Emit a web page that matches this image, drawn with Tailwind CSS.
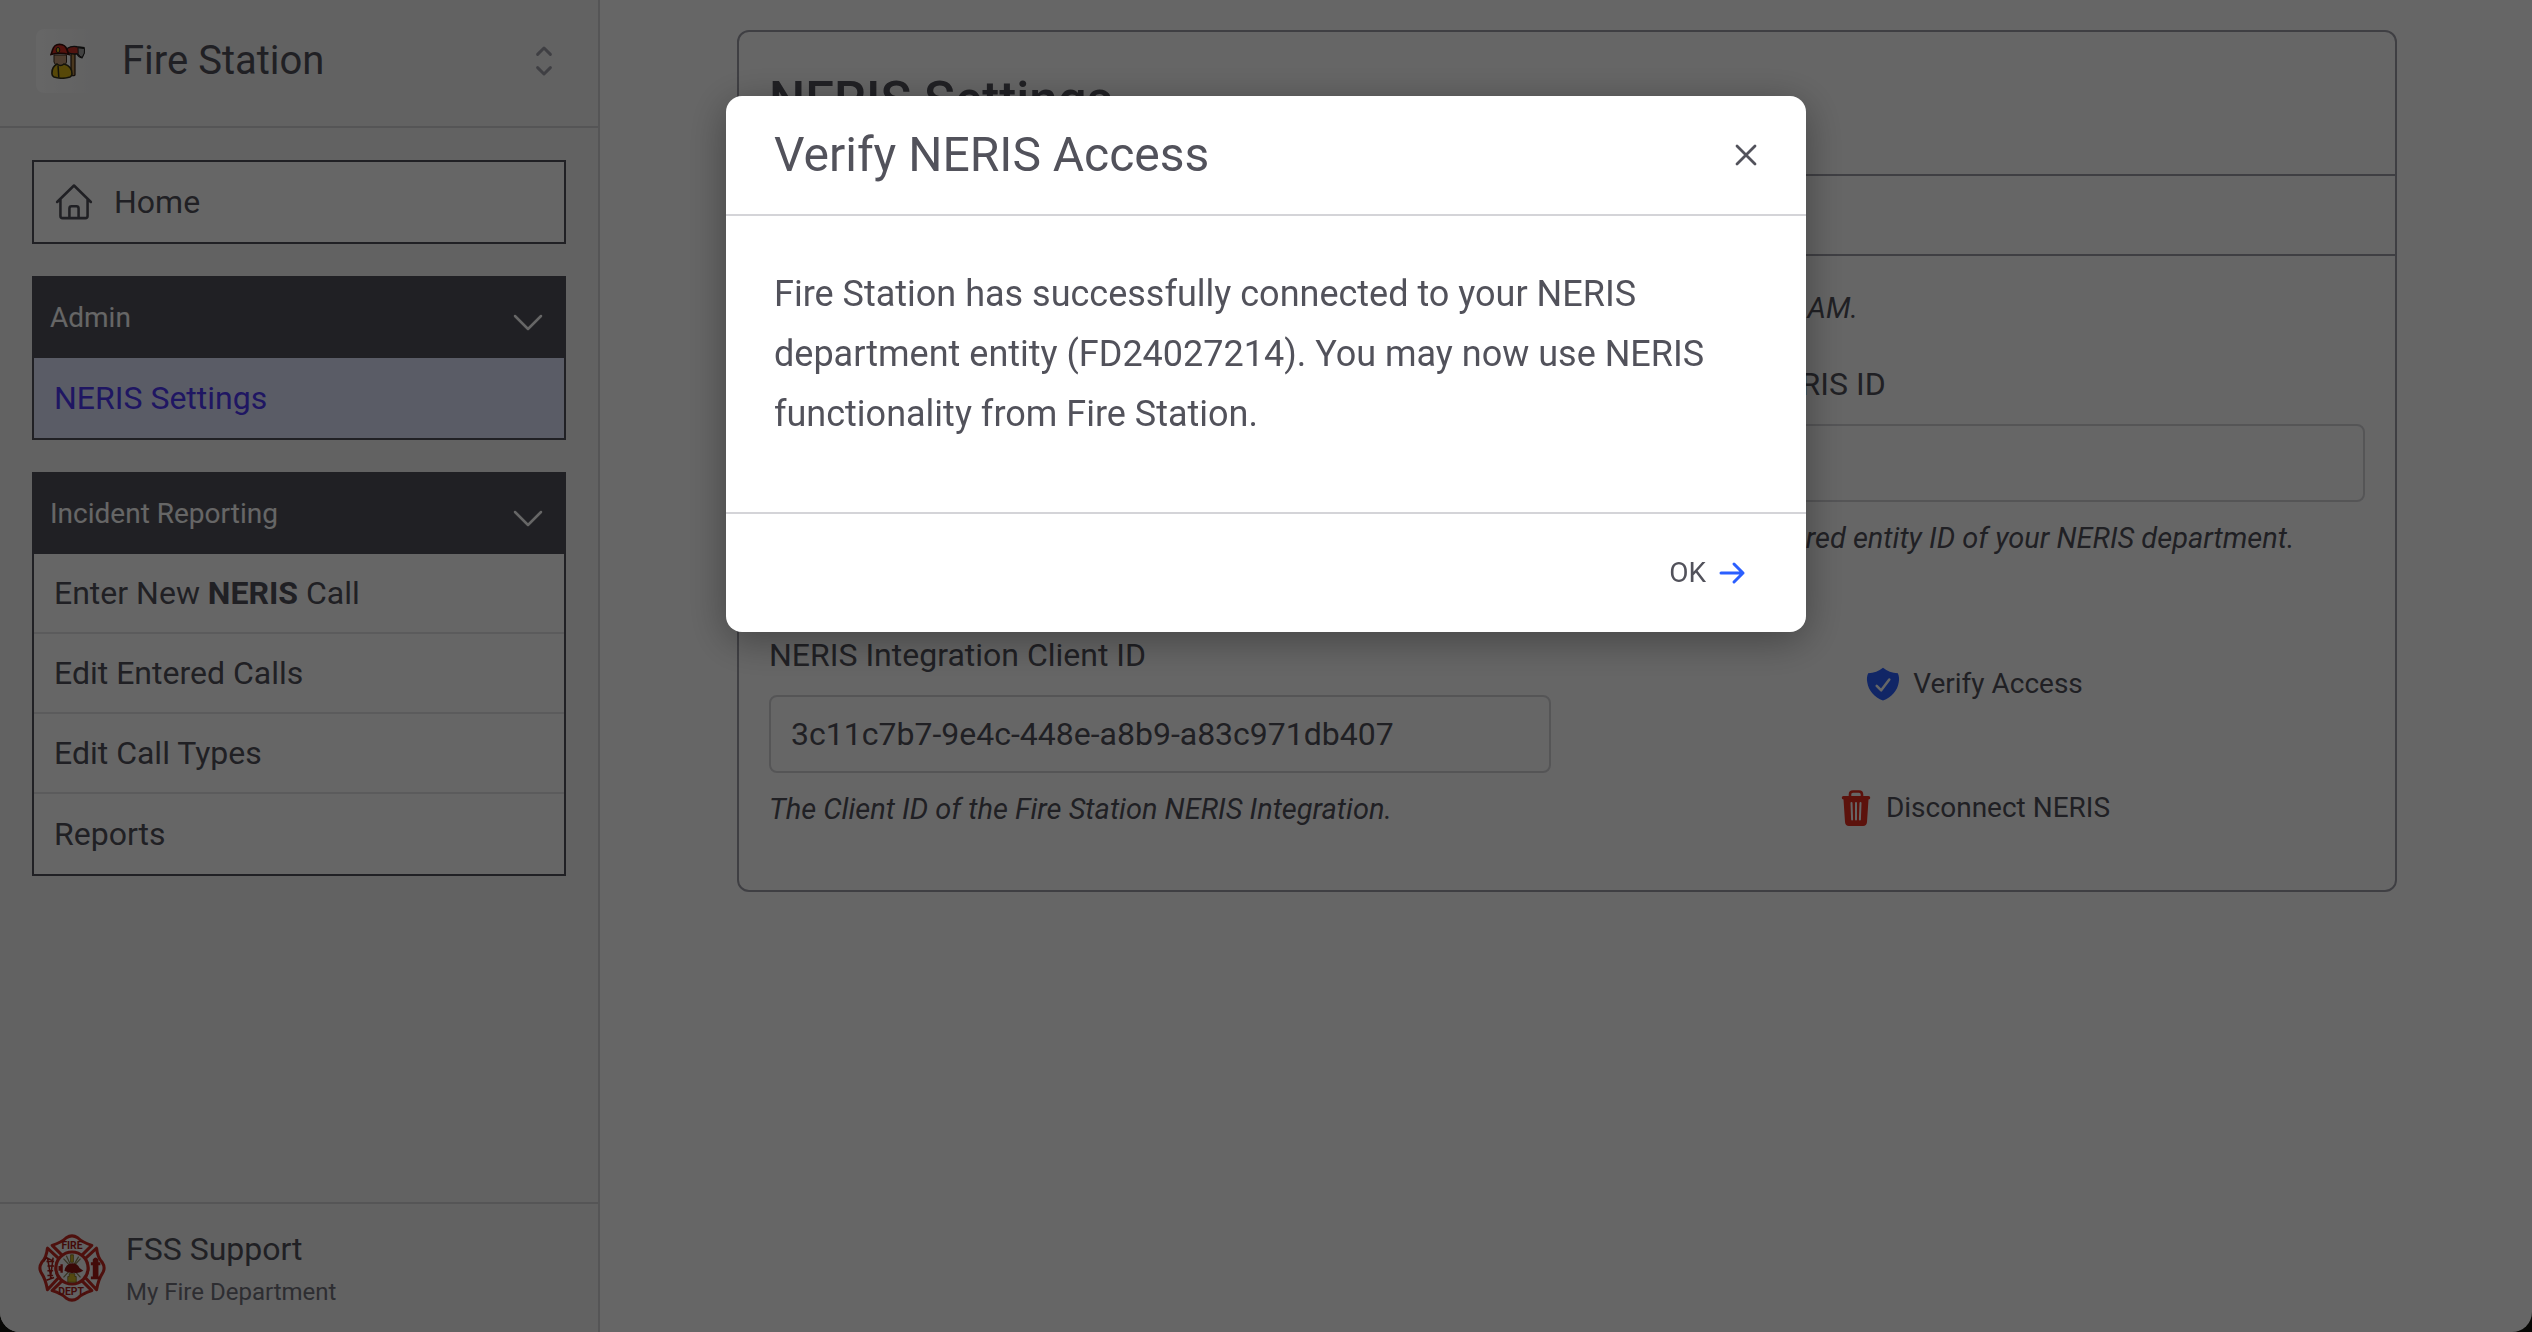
<!DOCTYPE html>
<html lang="en">
<head>
  <meta charset="UTF-8">
  <meta name="viewport" content="width=device-width, initial-scale=1.0">
  <title>NERIS Settings - Fire Station</title>
  <script src="https://cdn.jsdelivr.net/npm/@tailwindcss/browser@4"></script>
</head>
<body class="bg-[#14150f] font-['Roboto',sans-serif] text-[#52525b]">
  <div class="flex min-h-screen bg-white rounded-b-[20px] overflow-hidden">

    <!-- Sidebar -->
    <aside class="w-[600px] shrink-0 flex flex-col bg-zinc-100 border-r-2 border-zinc-300">
      <header class="h-32 flex items-center border-b-2 border-zinc-300 pl-9 pr-[34px] pb-1">
        <div class="size-16 rounded-lg bg-linear-to-r from-white to-zinc-100 flex items-center justify-center">
          <svg class="w-9 h-9" viewBox="0 0 36 36">
            <path d="M21 8v24q2 1.500 4 0V8z" fill="#b98a4d" stroke="#2b1a10" stroke-width="1.200"/>
            <path d="M17 5.500q5-3 10-1.800l7 1q1 5-2 10-3 0-5-4-5 1-9-1z" fill="#c8342a" stroke="#222" stroke-width="1.400"/>
            <path d="M28 4.800l6.500.8q.8 4.600-2.300 8.800-2.600-.5-4-3.600z" fill="#a5a5a5" stroke="#222" stroke-width="1"/>
            <path d="M4 12h12.500v7q-1.500 5-6 5T4 19z" fill="#c39a76" stroke="#3a2a1c" stroke-width="1"/>
            <path d="M2 31q-.5-7 5-10 3.500 3 7 0 8 2 8 10 0 2-2 3-8 2.500-16 0-2-1-2-3z" fill="#d9b416" stroke="#33301a" stroke-width="1.600"/>
            <path d="M8 22.500l.8 12" stroke="#33301a" stroke-width="1.500"/>
            <path d="M1 11.500Q2 9 2.500 7 4 1.500 9.500 1.300 15.500 1.500 17 7q.5 2 2 4.500-9-2.500-18 0z" fill="#d12d22" stroke="#3b100c" stroke-width="1.600"/>
            <ellipse cx="8" cy="7" rx="1.800" ry="2.600" fill="#d9b416" stroke="#222"/>
          </svg>
        </div>
        <span class="ml-[22px] flex-1 text-[40px] leading-[60px]">Fire Station</span>
        <button type="button" aria-label="Switch application" class="w-10 h-10 flex items-center justify-center text-[#9f9fa9]">
          <svg class="w-10 h-10" viewBox="0 0 20 20" fill="none" stroke="currentColor" stroke-width="1.500" stroke-linecap="round" stroke-linejoin="round">
            <path d="M6.800 6.700 10 3.500l3.200 3.200M6.800 13.300 10 16.500l3.200-3.200"/>
          </svg>
        </button>
      </header>

      <nav class="flex-1 flex flex-col gap-8 px-8 pt-8 text-[32px]">
        <a href="#" class="h-[84px] flex items-center bg-white border-2 border-[#52525b] pl-[18px]">
          <svg class="w-11 h-11" viewBox="0 0 24 24" fill="none" stroke="currentColor" stroke-width="1.400" stroke-linecap="round" stroke-linejoin="round">
            <path d="M2.800 12 12 3l9.200 9M4.600 10.500V19.600c0 .7.500 1.200 1.200 1.200h12.400c.7 0 1.200-.5 1.200-1.200V10.500M9.500 20.500V15.500c0-.7.500-1.200 1.200-1.200h2.600c.7 0 1.200.5 1.200 1.200v5"/>
          </svg>
          <span class="ml-[18px]">Home</span>
        </a>

        <section class="bg-white border-2 border-[#52525b]">
          <button type="button" class="w-full h-20 flex items-center justify-between bg-[#52525b] text-white text-[28px] pl-4 pr-[18px]">
            <span>Admin</span>
            <svg class="w-9 h-9" viewBox="0 0 36 36" fill="none" stroke="currentColor" stroke-width="2.500" stroke-linecap="round" stroke-linejoin="round"><path d="M5 16l13 13 13-13"/></svg>
          </button>
          <a href="#" class="h-20 flex items-center pl-5 bg-indigo-100 text-indigo-600">NERIS Settings</a>
        </section>

        <section class="bg-white border-2 border-[#52525b]">
          <button type="button" class="w-full h-20 flex items-center justify-between bg-[#52525b] text-white text-[28px] pl-4 pr-[18px]">
            <span>Incident Reporting</span>
            <svg class="w-9 h-9" viewBox="0 0 36 36" fill="none" stroke="currentColor" stroke-width="2.500" stroke-linecap="round" stroke-linejoin="round"><path d="M5 16l13 13 13-13"/></svg>
          </button>
          <a href="#" class="h-20 flex items-center pl-5 border-b-2 border-zinc-200"><span>Enter New <b>NERIS</b> Call</span></a>
          <a href="#" class="h-20 flex items-center pl-5 border-b-2 border-zinc-200">Edit Entered Calls</a>
          <a href="#" class="h-20 flex items-center pl-5 border-b-2 border-zinc-200">Edit Call Types</a>
          <a href="#" class="h-20 flex items-center pl-5">Reports</a>
        </section>
      </nav>

      <footer class="h-[130px] flex items-center border-t-2 border-zinc-300 pl-[38px]">
        <svg class="size-[68px]" viewBox="0 0 72 72">
          <g fill="#f4f4f5" stroke="#c22a22" stroke-width="3.200" stroke-linejoin="round">
            <path d="M15 12Q25 9 30 4q6-4 12 0 5 5 15 8L45 24q-9-6-18 0z"/>
            <path d="M15 60Q25 63 30 68q6 4 12 0 5-5 15-8L45 48q-9 6-18 0z"/>
            <path d="M10 15Q9 25 4 30q-4 6 0 12 4 6 6 17L22 46q-6-10 0-20z"/>
            <path d="M62 15q1 10 6 15 4 6 0 12-4 6-6 17L50 46q6-10 0-20z"/>
            <circle cx="36" cy="36" r="17"/>
          </g>
          <path d="M58 27q3-4 6 0v3h2v3h-2v12h2v3H56v-3h2V33h-2v-3h2z" fill="#a81c17"/>
          <path d="M10 25l4 23M16 25l-3 23M9 29h8M10 34h7M10 39h6M10 44h6M6 29l3-4 8 4M9 49l8-3" fill="none" stroke="#a81c17" stroke-width="1.600"/>
          <path d="M27 26l18 20M45 26L27 46M30 23l6 13 7-12" stroke="#8a8153" stroke-width="1.300" fill="none"/>
          <path d="M34.500 22h3v8h-3zM33 42h6v3h1.500v6h-9v-6H33z" fill="#d2b52a" stroke="#6b5a10" stroke-width=".7"/>
          <path d="M28 39q1-7 8-8 6 0 8 5l4 3q-4 3-10 2-5 1-10-2z" fill="#8f1512"/>
          <path d="M25 32v9M23 34v5" stroke="#a81c17" stroke-width="2.500"/>
          <g fill="#a81c17" font-family="Roboto, sans-serif" font-weight="700" font-size="11" text-anchor="middle">
            <text x="36" y="16">FIRE</text>
            <text x="36" y="65">DEPT.</text>
          </g>
        </svg>
        <div class="ml-5 pt-[2px]">
          <div class="text-[32px] leading-[46px]">FSS Support</div>
          <div class="text-2xl leading-10 text-[#71717b]">My Fire Department</div>
        </div>
      </footer>
    </aside>

    <!-- Settings card -->
    <main class="flex-1 pt-[30px] pl-[34px] pr-8">
      <div class="max-w-[1660px] mx-auto border-2 border-[#9f9fa9] rounded-xl">
        <div class="h-36 px-[30px] pb-1 flex items-center border-b-2 border-[#9f9fa9]">
          <h1 class="text-[51px] font-medium">NERIS Settings</h1>
        </div>
        <div class="h-20 border-b-2 border-[#9f9fa9]"></div>
        <form class="px-[30px] pt-7">
          <p class="text-[29px] leading-[48px] italic">Fire Station last connected to the NERIS Integration on November 6th, 2025 at 9:24 AM.</p>
          <div class="mt-4 grid grid-cols-2 gap-x-8">
            <div>
              <label for="entity" class="block text-[32px] leading-[72px]">Department</label>
              <input id="entity" type="text" value="My Fire Department" readonly class="mt-1 w-full h-[78px] px-5 text-[32px] border-2 border-zinc-300 rounded-lg">
            </div>
            <div>
              <label for="neris-id" class="block text-[32px] leading-[72px]">Department NERIS ID</label>
              <input id="neris-id" type="text" value="FD24027214" readonly class="mt-1 w-full h-[78px] px-5 text-[32px] border-2 border-zinc-300 rounded-lg">
              <p class="text-[29px] leading-[72px] italic">The exact configured entity ID of your NERIS department.</p>
            </div>
            <div class="mt-[45px]">
              <label for="client-id" class="block text-[32px] leading-[72px]">NERIS Integration Client ID</label>
              <input id="client-id" type="text" value="3c11c7b7-9e4c-448e-a8b9-a83c971db407" readonly class="mt-1 w-full h-[78px] px-5 text-[32px] border-2 border-zinc-300 rounded-lg">
              <p class="text-[29px] leading-[72px] italic">The Client ID of the Fire Station NERIS Integration.</p>
            </div>
            <div class="mt-[70px] flex flex-col items-center gap-11 text-[28px]">
              <button type="button" class="h-20 flex items-center gap-3">
                <svg class="w-9 h-9" viewBox="0 0 24 24">
                  <path d="M12 1.200c-2.800 2.300-6 3.600-9.900 3.700-.9 2-1 4-.6 6 .8 5.500 4.700 10.200 10.500 12.100 5.800-1.900 9.700-6.600 10.500-12.100.4-2 .3-4-.6-6C18 4.800 14.800 3.500 12 1.200z" fill="#2b5fff"/>
                  <path d="M7.800 13.200l3 3 5.400-7.200" fill="none" stroke="#fff" stroke-width="1.700" stroke-linecap="round" stroke-linejoin="round"/>
                </svg>
                <span>Verify Access</span>
              </button>
              <button type="button" class="h-20 flex items-center gap-3">
                <svg class="w-9 h-9" viewBox="-4 0 36 36">
                  <path d="M8 7V4.500Q8 1.500 11 1.500h6q3 0 3 3V7" fill="none" stroke="#e62d1f" stroke-width="2.600"/>
                  <path d="M1.500 6h25a1.500 1.500 0 0 1 0 3.500L25 32q-.3 4-4 4H7q-3.700 0-4-4L1.500 9.500a1.500 1.500 0 0 1 0-3.500z" fill="#e62d1f"/>
                  <path d="M9.500 13l.6 16.500M18.500 13l-.6 16.500M14 13v16.500" stroke="#fff" stroke-width="2" stroke-linecap="round"/>
                </svg>
                <span>Disconnect NERIS</span>
              </button>
            </div>
          </div>
          <div class="h-[42px]"></div>
        </form>
      </div>
    </main>
  </div>

  <!-- Dialog -->
  <div class="fixed inset-0 bg-black/60 flex items-start justify-center pt-24">
    <div role="dialog" aria-modal="true" aria-labelledby="dialog-title" class="w-[1080px] bg-white rounded-2xl shadow-[0_8px_40px_rgba(0,0,0,0.35)]">
      <div class="h-[120px] px-12 flex items-center justify-between border-b-2 border-zinc-300">
        <h2 id="dialog-title" class="text-5xl">Verify NERIS Access</h2>
        <button type="button" aria-label="Close" class="w-6 h-6">
          <svg class="w-6 h-6" viewBox="0 0 24 24" fill="none" stroke="currentColor" stroke-width="2.800" stroke-linecap="round"><path d="M3 3l18 18M21 3L3 21"/></svg>
        </button>
      </div>
      <p class="px-12 pt-12 pb-[68px] text-4xl leading-[60px]">Fire Station has successfully connected to your NERIS department entity (FD24027214). You may now use NERIS functionality from Fire Station.</p>
      <div class="h-[120px] px-[60px] flex items-center justify-end border-t-2 border-zinc-300">
        <button type="button" class="flex items-center gap-3 text-[28px]">
          <span>OK</span>
          <svg class="w-7 h-7" viewBox="0 0 28 28" fill="none" stroke="#2b5fff" stroke-width="3" stroke-linecap="round" stroke-linejoin="round"><path d="M3 14h22M16 5l9 9-9 9"/></svg>
        </button>
      </div>
    </div>
  </div>
</body>
</html>
